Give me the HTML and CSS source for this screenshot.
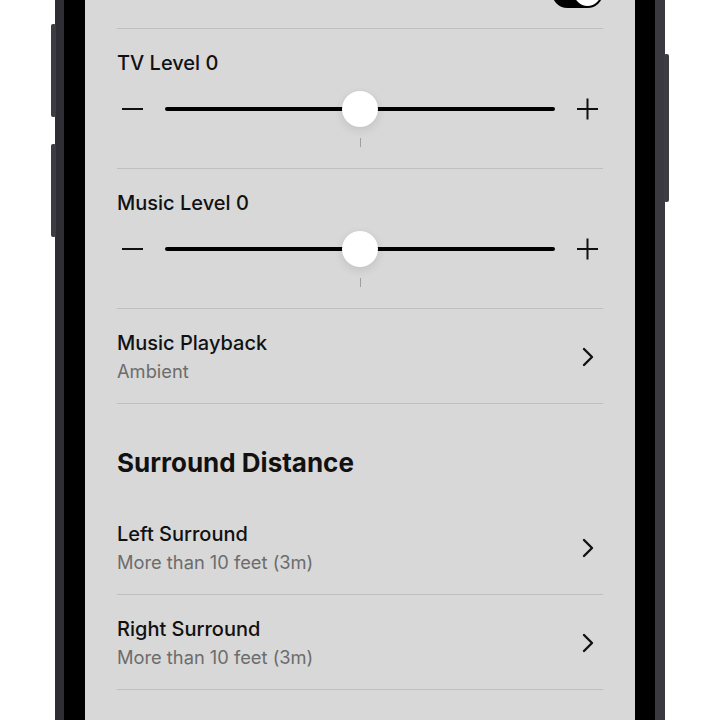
FILE: index.html
```html
<!DOCTYPE html>
<html lang="en">
<head>
<meta charset="UTF-8" />
<meta name="viewport" content="width=device-width, initial-scale=1" />
<title>Home Theater Settings</title>
<link rel="stylesheet" href="styles.css">
</head>
<body>
<div class="phone">
  <span class="side-btn left-top" aria-hidden="true"></span>
  <span class="side-btn left-bottom" aria-hidden="true"></span>
  <span class="side-btn right" aria-hidden="true"></span>

  <div class="bezel">
    <main class="screen">

      <div class="row toggle-row">
        <span class="row-title">Surrounds</span>
        <span class="toggle on" role="switch" aria-checked="true"><span class="knob"></span></span>
      </div>

      <section class="level" aria-label="TV Level">
        <div class="level-label">TV Level 0</div>
        <div class="slider-row">
          <svg class="step" viewBox="0 0 32 32" aria-hidden="true"><line x1="5" y1="16" x2="26" y2="16" /></svg>
          <div class="track"><span class="thumb"></span></div>
          <svg class="step" viewBox="0 0 32 32" aria-hidden="true"><line x1="6" y1="16" x2="27" y2="16" /><line x1="16.5" y1="5.5" x2="16.5" y2="26.5" /></svg>
        </div>
        <div class="tick"></div>
      </section>

      <section class="level" aria-label="Music Level">
        <div class="level-label">Music Level 0</div>
        <div class="slider-row">
          <svg class="step" viewBox="0 0 32 32" aria-hidden="true"><line x1="5" y1="16" x2="26" y2="16" /></svg>
          <div class="track"><span class="thumb"></span></div>
          <svg class="step" viewBox="0 0 32 32" aria-hidden="true"><line x1="6" y1="16" x2="27" y2="16" /><line x1="16.5" y1="5.5" x2="16.5" y2="26.5" /></svg>
        </div>
        <div class="tick"></div>
      </section>

      <a class="row nav-row" href="#">
        <div class="nav-text">
          <span class="row-title">Music Playback</span>
          <span class="row-sub">Ambient</span>
        </div>
        <svg class="chevron" viewBox="0 0 12 20" aria-hidden="true"><path d="M2 2 L10 10 L2 18" /></svg>
      </a>

      <h2 class="section-title">Surround Distance</h2>

      <a class="row nav-row" href="#">
        <div class="nav-text">
          <span class="row-title">Left Surround</span>
          <span class="row-sub">More than 10 feet (3m)</span>
        </div>
        <svg class="chevron" viewBox="0 0 12 20" aria-hidden="true"><path d="M2 2 L10 10 L2 18" /></svg>
      </a>

      <a class="row nav-row" href="#">
        <div class="nav-text">
          <span class="row-title">Right Surround</span>
          <span class="row-sub">More than 10 feet (3m)</span>
        </div>
        <svg class="chevron" viewBox="0 0 12 20" aria-hidden="true"><path d="M2 2 L10 10 L2 18" /></svg>
      </a>

    </main>
  </div>
</div>
</body>
</html>
```

FILE: styles.css
```css
/* Base */
* {
  box-sizing: border-box;
}
body {
  margin: 0;
  background: #ffffff;
  font-family: Inter, "Noto Sans", sans-serif;
  color: #111111;
  overflow: hidden;
}

/* Phone frame */
.phone {
  position: relative;
  width: 610px;
  height: 720px;
  margin: 0 auto;
  padding: 0 10px 0 9px;
  background: linear-gradient(90deg, #2e2d33 0%, #4a4950 40%, #3a3940 100%);
}
.bezel {
  height: 100%;
  padding: 0 20px 0 21px;
  background: #000000;
}
.side-btn {
  position: absolute;
  width: 5px;
  background: #3d3c43;
  border-radius: 2px;
}
.side-btn.left-top {
  left: -4px;
  top: 24px;
  height: 93px;
}
.side-btn.left-bottom {
  left: -4px;
  top: 144px;
  height: 93px;
}
.side-btn.right {
  right: -4px;
  top: 54px;
  height: 148px;
}

/* Screen */
.screen {
  height: 100%;
  overflow: hidden;
  background: #d8d8d8;
  padding: 0 32px;
}

.row {
  display: flex;
  justify-content: space-between;
  align-items: center;
  border-bottom: 1px solid #bfbfbf;
  color: inherit;
  text-decoration: none;
}
.row-title {
  font-size: 20px;
  line-height: 24px;
  font-weight: 500;
  color: #111111;
}
.row-sub {
  font-size: 18.3px;
  line-height: 22px;
  color: #6c6c6c;
}

/* Toggle row (scrolled partly out of view) */
.toggle-row {
  height: 73px;
  margin-top: -44px;
}
.toggle {
  display: flex;
  justify-content: flex-end;
  align-items: center;
  width: 51px;
  height: 31px;
  padding: 2px;
  border-radius: 16px;
  background: #000000;
}
.toggle .knob {
  width: 27px;
  height: 27px;
  border-radius: 50%;
  background: #ffffff;
}

/* Level sliders */
.level {
  display: flex;
  flex-direction: column;
  padding: 22px 0 21px;
  border-bottom: 1px solid #bfbfbf;
}
.level-label {
  font-size: 20px;
  line-height: 24px;
  font-weight: 500;
}
.slider-row {
  display: flex;
  align-items: center;
  gap: 16px;
  height: 36px;
  margin-top: 16px;
}
.step {
  width: 32px;
  height: 32px;
  flex: none;
  stroke: #111111;
  stroke-width: 2;
}
.track {
  flex: 1;
  height: 4px;
  border-radius: 2px;
  background: #000000;
  display: flex;
  justify-content: center;
  align-items: center;
}
.thumb {
  flex: none;
  width: 36px;
  height: 36px;
  border-radius: 50%;
  background: #ffffff;
  box-shadow: 0 3px 10px rgb(0 0 0 / 0.1), 0 0 1px rgb(0 0 0 / 0.08);
}
.tick {
  align-self: center;
  width: 1px;
  height: 9px;
  margin-top: 11px;
  background: #9e9e9e;
}

/* Navigation rows */
.nav-row {
  padding: 22px 0 21px;
}
.nav-text {
  display: flex;
  flex-direction: column;
  gap: 5px;
}
.chevron {
  width: 12px;
  height: 20px;
  margin-right: 9px;
  fill: none;
  stroke: #111111;
  stroke-width: 2.4;
  stroke-linecap: round;
  stroke-linejoin: round;
}

/* Section header */
.section-title {
  margin: 0;
  padding: 43px 0 21px;
  font-size: 26px;
  line-height: 32px;
  font-weight: 700;
}
```
